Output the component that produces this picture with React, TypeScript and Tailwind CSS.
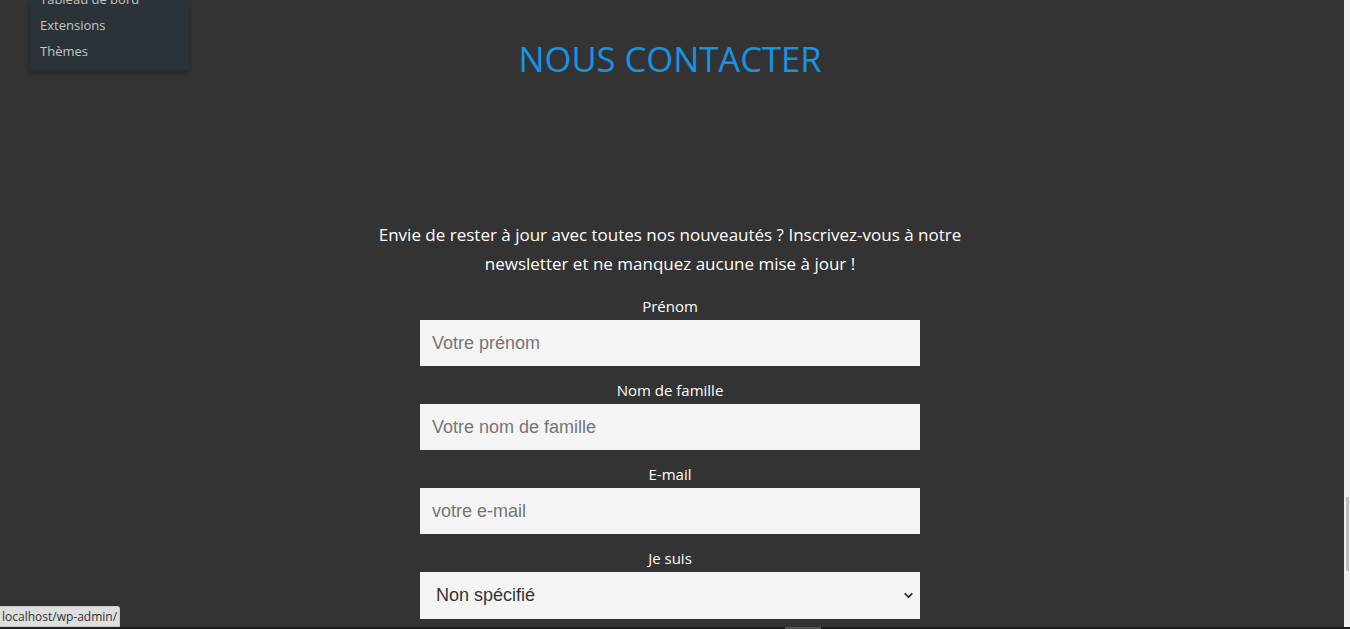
import { ChevronDown } from 'lucide-react'

const fields = [
  { label: 'Prénom', placeholder: 'Votre prénom', type: 'text' },
  { label: 'Nom de famille', placeholder: 'Votre nom de famille', type: 'text' },
  { label: 'E-mail', placeholder: 'votre e-mail', type: 'email' },
]

function AdminMenu() {
  return (
    <div className="absolute left-[30px] top-0 w-[159px] bg-[#2c3338] pb-[6px] shadow-[0_3px_5px_rgba(0,0,0,0.25)] font-['Open_Sans',sans-serif] text-[13px] text-[#c3c4c7]">
      <div className="-mt-[14px] px-[10px] leading-[26px]">Tableau de bord</div>
      <div className="px-[10px] leading-[26px]">Extensions</div>
      <div className="px-[10px] leading-[26px]">Thèmes</div>
    </div>
  )
}

export default function App() {
  return (
    <div className="relative flex h-[629px] w-[1350px] overflow-hidden bg-[#333333]">
      <main className="flex w-[1344px] flex-col items-start">
        <div className="flex w-[1340px] flex-col items-center font-['Open_Sans',sans-serif]">
          <h1 className="mt-[36px] text-[34.6px] leading-[46px] text-[#1793e6]">NOUS CONTACTER</h1>

          <p className="mt-[138px] w-[620px] text-center text-[17px] leading-[29px] text-white">
            Envie de rester à jour avec toutes nos nouveautés ? Inscrivez-vous à notre newsletter et ne manquez aucune mise à jour !
          </p>

          <form className="mt-[18px] flex w-[500px] flex-col items-stretch">
            {fields.map((f) => (
              <div key={f.label} className="flex flex-col">
                <label className="text-center text-[15px] leading-[20px] text-white">{f.label}</label>
                <input
                  type={f.type}
                  placeholder={f.placeholder}
                  className="mb-[14px] mt-[4px] h-[46px] bg-[#f4f4f4] px-[12px] font-['Liberation_Sans',Arial,sans-serif] text-[18px] text-[#333] outline-none placeholder:text-[#757575]"
                />
              </div>
            ))}
            <label className="text-center text-[15px] leading-[20px] text-white">Je suis</label>
            <div className="relative mt-[4px] flex h-[47px] items-center bg-[#f4f4f4] pl-[16px] font-['Liberation_Sans',Arial,sans-serif] text-[18px] text-[#333]">
              Non spécifié
              <ChevronDown className="absolute right-[5px] top-[17px] h-[13px] w-[13px] text-[#333]" strokeWidth={3.5} />
            </div>
          </form>
        </div>
      </main>

      <div className="relative w-[6px] bg-[#f1f1f1]">
        <div className="absolute left-[2px] top-[497px] h-[74px] w-[3px] bg-[#c1c1c1]" />
      </div>

      <AdminMenu />

      <div className="absolute bottom-[2px] left-0 rounded-tr-[3px] border border-l-0 border-[#c8c8c8] bg-[#dedede] px-[2px] font-['Open_Sans',sans-serif] text-[12px] leading-[19px] text-[#333]">
        localhost/wp-admin/
      </div>

      <div className="absolute bottom-0 left-0 h-[2px] w-[1350px] bg-[#1e1e1e]">
        <div className="absolute left-[785px] top-0 h-[2px] w-[36px] bg-[#555]" />
      </div>
    </div>
  )
}
